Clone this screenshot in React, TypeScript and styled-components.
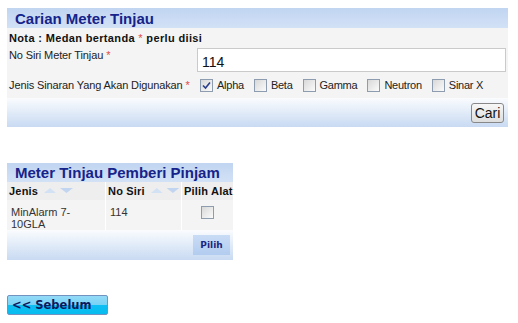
import React from "react";
import styled, { createGlobalStyle } from "styled-components";

const Global = createGlobalStyle`
  html, body { margin: 0; padding: 0; background: #ffffff; }
  body { padding: 8px 7px; font-family: "Liberation Sans", Arial, sans-serif; }
  * { box-sizing: border-box; }
`;

const Page = styled.div`
  display: flex;
  flex-direction: column;
  align-items: flex-start;
`;

const Panel = styled.div<{ $width: number }>`
  width: ${(p) => p.$width}px;
  background: #f4f4f4;
  display: flex;
  flex-direction: column;
`;

const Header = styled.div<{ $height: number }>`
  height: ${(p) => p.$height}px;
  background: linear-gradient(to bottom, #c1d5f1, #d2e1f6);
  padding-left: 8px;
  display: flex;
  align-items: center;
  font-family: "Liberation Sans", Arial, sans-serif;
  font-weight: bold;
  font-size: 15px;
  color: #16238a;
  white-space: nowrap;
`;

const Nota = styled.div`
  height: 18px;
  padding: 4px 2px 0;
  font-size: 11px;
  line-height: 13px;
  font-weight: bold;
  color: #111;
  letter-spacing: 0.35px;
`;

const Star = styled.span`
  color: #e24a46;
  font-weight: normal;
`;

const FormRow = styled.div<{ $height: number; $align?: string }>`
  height: ${(p) => p.$height}px;
  display: grid;
  grid-template-columns: 188px 1fr;
  align-items: ${(p) => p.$align || "start"};
  padding: 0 2px;
  font-size: 11px;
  line-height: 13px;
  color: #222;
`;

const Label = styled.div<{ $top?: number }>`
  padding-top: ${(p) => p.$top || 0}px;
  letter-spacing: -0.12px;
`;

const TextInput = styled.input`
  margin-top: 2px;
  width: 309px;
  height: 24px;
  border: 1px solid #cacaca;
  background: #fff;
  font-family: "Liberation Sans", Arial, sans-serif;
  font-size: 14px;
  padding: 3px 4px 0;
  color: #111;
  outline: none;
`;

const Checks = styled.div`
  display: flex;
  align-items: center;
  gap: 10px;
  margin-left: 3px;
  font-size: 11px;
  letter-spacing: -0.25px;
  color: #222;
`;

const CheckItem = styled.label`
  display: flex;
  align-items: center;
  gap: 4px;
`;

const Box = styled.span`
  width: 13px;
  height: 13px;
  border: 1px solid #8e9cb0;
  background: linear-gradient(135deg, #d8d8d8, #fbfbfb);
  display: inline-flex;
  align-items: center;
  justify-content: center;
`;

const FooterBar = styled.div<{ $height: number; $pad: number }>`
  height: ${(p) => p.$height}px;
  background: linear-gradient(to bottom, #fafcfe, #c8daf2);
  display: flex;
  justify-content: flex-end;
  align-items: center;
  padding-right: ${(p) => p.$pad}px;
`;

const CariButton = styled.button`
  height: 20px;
  width: 33px;
  padding: 0;
  border: 1px solid #888;
  border-radius: 3px;
  background: linear-gradient(to bottom, #f7f7f7, #dedede);
  font-family: "Liberation Sans", Arial, sans-serif;
  font-size: 14px;
  color: #111;
`;

const Spacer = styled.div<{ $h: number }>`
  height: ${(p) => p.$h}px;
`;

const Table = styled.div`
  display: grid;
  grid-template-columns: 98px 75px 51px;
  column-gap: 1px;
  background: #ffffff;
`;

const Th = styled.div`
  height: 18px;
  background: #eeeeee;
  font-size: 11px;
  font-weight: bold;
  color: #111;
  display: flex;
  align-items: center;
  gap: 5px;
  padding-left: 2px;
  letter-spacing: 0.2px;
  white-space: nowrap;
  overflow: hidden;
`;

const Td = styled.div<{ $center?: boolean }>`
  background: #f4f4f4;
  font-size: 11px;
  color: #333;
  padding: 6px 4px 0;
  line-height: 12px;
  height: 30px;
  display: flex;
  justify-content: ${(p) => (p.$center ? "center" : "flex-start")};
  align-items: flex-start;
`;

const PilihButton = styled.button`
  height: 20px;
  width: 37px;
  border: none;
  background: linear-gradient(to bottom, #c9dcf6, #b2ccef);
  font-family: "DejaVu Sans", Verdana, sans-serif;
  font-size: 9px;
  font-weight: bold;
  color: #1a2580;
  padding: 0;
`;

const SebelumButton = styled.button`
  margin-top: 1px;
  width: 101px;
  height: 20px;
  border: 1px solid #7193c0;
  border-radius: 2px;
  background: linear-gradient(to bottom, #93daf7 0%, #78d3f5 50%, #0dbff3 52%, #08bcf0 100%);
  font-family: "DejaVu Sans", Verdana, sans-serif;
  font-size: 11.5px;
  font-weight: bold;
  color: #0e1a5e;
  text-align: left;
  padding: 0 0 0 4px;
`;

const Arrows = () => (
  <svg width="32" height="10" viewBox="0 0 32 10">
    <polygon points="1,7 7,2 13,7" fill="#d3e1f5" />
    <polygon points="17,2 30,2 23.5,7" fill="#c2d5f0" />
  </svg>
);

const Check = ({ checked }: { checked?: boolean }) => (
  <Box>
    {checked && (
      <svg width="9" height="9" viewBox="0 0 9 9">
        <path d="M1 4.5 L3.5 7 L8 1.5" stroke="#2a3f8a" strokeWidth="1.6" fill="none" />
      </svg>
    )}
  </Box>
);

export default function App() {
  return (
    <>
      <Global />
      <Page>
        <Panel $width={501}>
          <Header $height={20}>Carian Meter Tinjau</Header>
          <Nota>
            Nota : Medan bertanda <Star>*</Star> perlu diisi
          </Nota>
          <FormRow $height={27}>
            <Label $top={3}>
              No Siri Meter Tinjau <Star>*</Star>
            </Label>
            <TextInput defaultValue="114" />
          </FormRow>
          <FormRow $height={25} $align="center">
            <Label>
              Jenis Sinaran Yang Akan Digunakan <Star>*</Star>
            </Label>
            <Checks>
              <CheckItem><Check checked />Alpha</CheckItem>
              <CheckItem><Check />Beta</CheckItem>
              <CheckItem><Check />Gamma</CheckItem>
              <CheckItem><Check />Neutron</CheckItem>
              <CheckItem><Check />Sinar X</CheckItem>
            </Checks>
          </FormRow>
          <FooterBar $height={29} $pad={4}>
            <CariButton>Cari</CariButton>
          </FooterBar>
        </Panel>
        <Spacer $h={36} />
        <Panel $width={226}>
          <Header $height={19}>Meter Tinjau Pemberi Pinjam</Header>
          <Table>
            <Th>Jenis <Arrows /></Th>
            <Th>No Siri <Arrows /></Th>
            <Th>Pilih Alat</Th>
            <Td>MinAlarm 7-<br />10GLA</Td>
            <Td>114</Td>
            <Td $center><Check /></Td>
          </Table>
          <FooterBar $height={30} $pad={3}>
            <PilihButton>Pilih</PilihButton>
          </FooterBar>
        </Panel>
        <Spacer $h={34} />
        <SebelumButton>&lt;&lt; Sebelum</SebelumButton>
      </Page>
    </>
  );
}
